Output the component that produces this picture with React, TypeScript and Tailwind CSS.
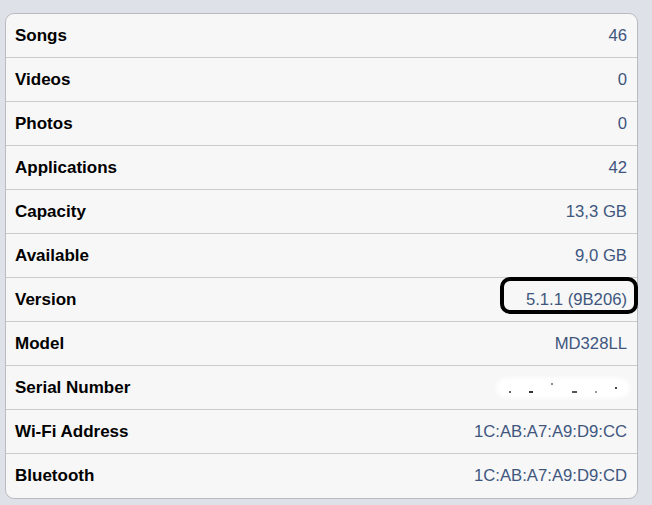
const ROWS: [string, string][] = [
  ['Songs', '46'],
  ['Videos', '0'],
  ['Photos', '0'],
  ['Applications', '42'],
  ['Capacity', '13,3 GB'],
  ['Available', '9,0 GB'],
  ['Version', '5.1.1 (9B206)'],
  ['Model', 'MD328LL'],
  ['Serial Number', ''],
  ['Wi-Fi Address', '1C:AB:A7:A9:D9:CC'],
  ['Bluetooth', '1C:AB:A7:A9:D9:CD'],
]

// the blurred-out serial number
function Smudge() {
  return (
    <div className="flex h-[14px] w-[128px] items-end justify-between rounded-full bg-white px-[10px] pb-[2px] shadow-[0_0_4px_3px_#ffffff]">
      <span className="h-[2px] w-[2px] bg-[#666]" />
      <span className="h-[2px] w-[4px] bg-[#333]" />
      <span className="mb-[8px] h-[2px] w-[2px] bg-[#888]" />
      <span className="h-[2px] w-[5px] bg-[#555]" />
      <span className="h-[2px] w-[2px] bg-[#999]" />
      <span className="mb-[4px] h-[2px] w-[2px] bg-[#444]" />
    </div>
  )
}

export default function App() {
  return (
    <div
      className="min-h-screen bg-[#dee1e7] pl-[5px] pt-[13px]"
      style={{ fontFamily: '"Liberation Sans", Arial, sans-serif' }}
    >
      <div className="relative w-[633px] rounded-[9px] border border-[#b8bbc1] bg-[#f7f7f7]">
        {ROWS.map(([label, value], i) => (
          <div
            key={label}
            className={`flex h-[44px] items-center justify-between pl-[9px] pr-[10px] ${
              i < ROWS.length - 1 ? 'border-b border-[#cbcbcb]' : ''
            }`}
          >
            <span className="text-[17px] font-bold text-black">{label}</span>
            {label === 'Serial Number' ? (
              <Smudge />
            ) : (
              <span className="text-[16.7px] text-[#40567e]">{value}</span>
            )}
          </div>
        ))}
        {/* hand-drawn highlight around the version */}
        <div className="absolute left-[494px] top-[263px] h-[37px] w-[138px] rounded-[10px] border-[4px] border-black" />
      </div>
    </div>
  )
}
